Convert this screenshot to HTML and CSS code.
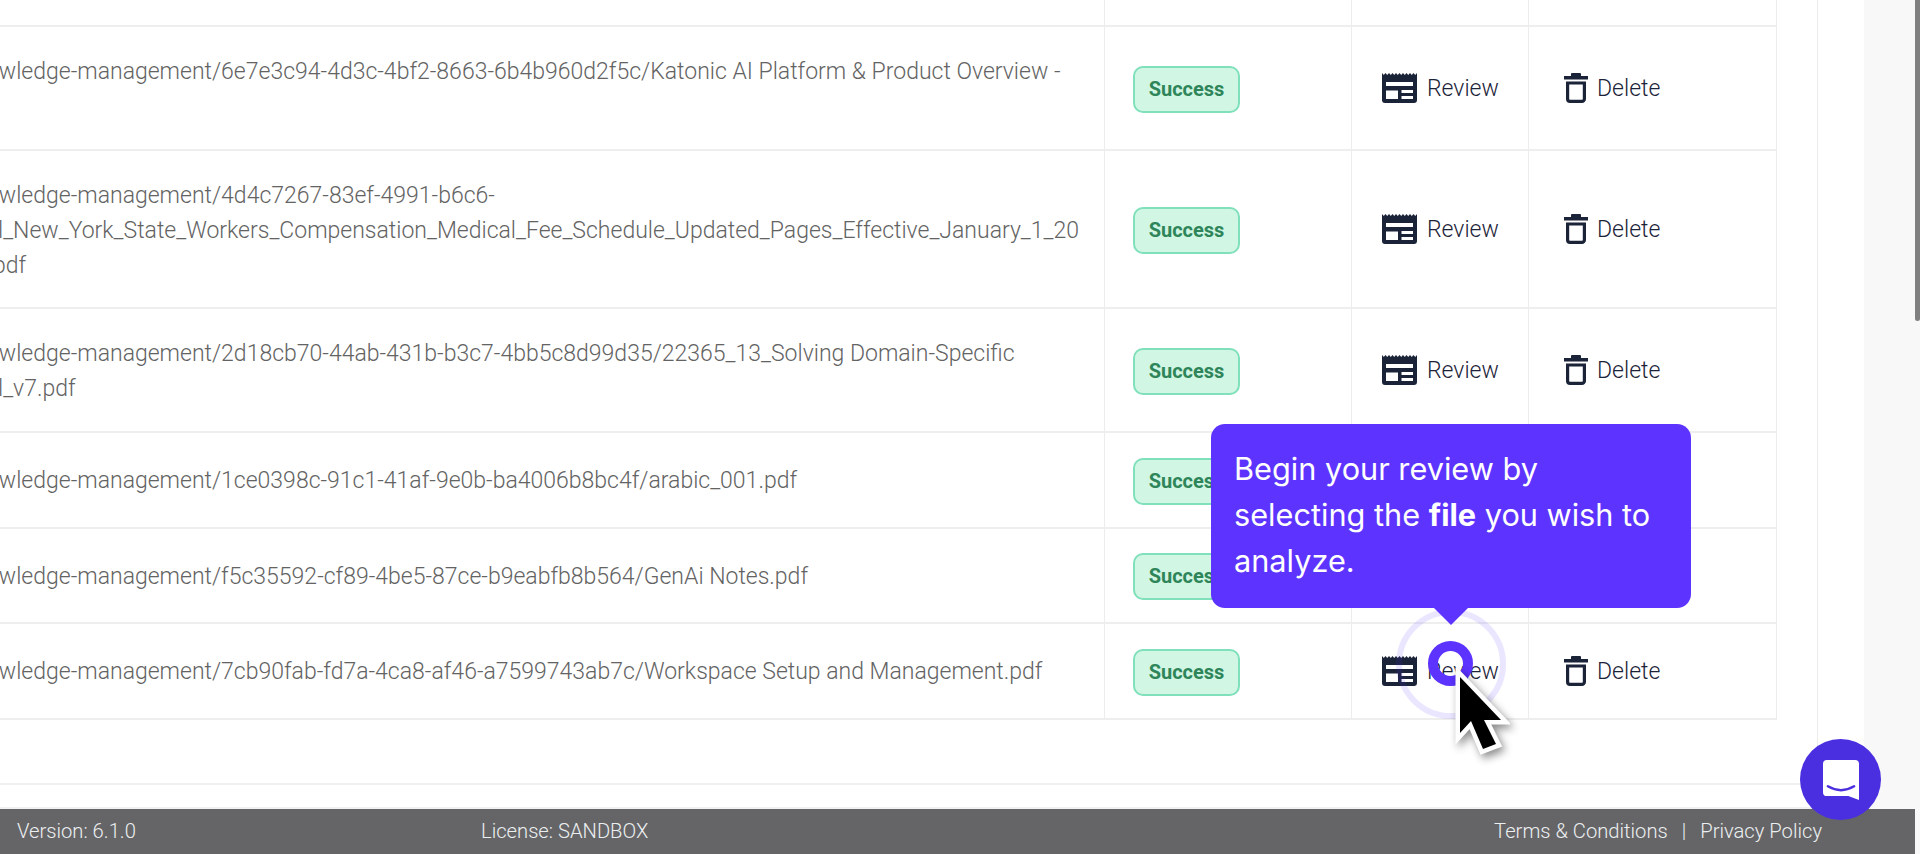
FILE: index.html
```html
<!DOCTYPE html>
<html lang="en">
<head>
<meta charset="utf-8">
<title>Knowledge management review</title>
<link rel="stylesheet" href="styles.css">
</head>
<body>
<svg class="defs" width="0" height="0" aria-hidden="true">
  <symbol id="i-review" viewBox="0 0 35 30">
    <path fill="#1b2338" d="M0 0l1.750 2L3.500 0l1.750 2L7 0l1.750 2L10.500 0l1.750 2L14 0l1.750 2L17.500 0l1.750 2L21 0l1.750 2L24.500 0l1.750 2L28 0l1.750 2L31.500 0l1.750 2L35 0v27a3 3 0 0 1-3 3H3a3 3 0 0 1-3-3z"/>
    <path fill="#fff" d="M4 9h27v4H4zM4 17.500h12V26H4zM19.500 17h11.500v3H19.500zM19.500 23h11.500v3H19.500z"/>
  </symbol>
  <symbol id="i-delete" viewBox="0 0 24 30">
    <path fill="#1b2338" d="M8 0h8a1 1 0 0 1 1 1v2h7v3.500H0V3h7V1a1 1 0 0 1 1-1z"/>
    <path fill="none" stroke="#1b2338" stroke-width="3.200" d="M3.600 10h16.800v16a2.400 2.400 0 0 1-2.400 2.400H6A2.400 2.400 0 0 1 3.600 26z"/>
  </symbol>
</svg>
<div class="page">
  <div class="workspace">
    <main class="main">
      <div class="card">
        <div class="table">
          <div class="row row-top">
            <div class="cell path"></div><div class="cell status"></div><div class="cell action"></div><div class="cell action-del"></div>
          </div>
          <div class="row row-a">
            <div class="cell path"><p class="path-text">knowledge-management/6e7e3c94-4d3c-4bf2-8663-6b4b960d2f5c/Katonic AI Platform &amp; Product Overview -</p></div>
            <div class="cell status"><span class="badge">Success</span></div>
            <div class="cell action"><svg class="ic-review"><use href="#i-review"/></svg><span>Review</span></div>
            <div class="cell action-del"><svg class="ic-delete"><use href="#i-delete"/></svg><span>Delete</span></div>
          </div>
          <div class="row row-b">
            <div class="cell path"><p class="path-text">knowledge-management/4d4c7267-83ef-4991-b6c6-<br>Eval_New_York_State_Workers_Compensation_Medical_Fee_Schedule_Updated_Pages_Effective_January_1_20<br>24.pdf</p></div>
            <div class="cell status"><span class="badge">Success</span></div>
            <div class="cell action"><svg class="ic-review"><use href="#i-review"/></svg><span>Review</span></div>
            <div class="cell action-del"><svg class="ic-delete"><use href="#i-delete"/></svg><span>Delete</span></div>
          </div>
          <div class="row row-c">
            <div class="cell path"><p class="path-text">knowledge-management/2d18cb70-44ab-431b-b3c7-4bb5c8d99d35/22365_13_Solving Domain-Specific<br>Eval_v7.pdf</p></div>
            <div class="cell status"><span class="badge">Success</span></div>
            <div class="cell action"><svg class="ic-review"><use href="#i-review"/></svg><span>Review</span></div>
            <div class="cell action-del"><svg class="ic-delete"><use href="#i-delete"/></svg><span>Delete</span></div>
          </div>
          <div class="row row-d">
            <div class="cell path"><p class="path-text">knowledge-management/1ce0398c-91c1-41af-9e0b-ba4006b8bc4f/arabic_001.pdf</p></div>
            <div class="cell status"><span class="badge">Success</span></div>
            <div class="cell action"></div>
            <div class="cell action-del"></div>
          </div>
          <div class="row row-d">
            <div class="cell path"><p class="path-text">knowledge-management/f5c35592-cf89-4be5-87ce-b9eabfb8b564/GenAi Notes.pdf</p></div>
            <div class="cell status"><span class="badge">Success</span></div>
            <div class="cell action"></div>
            <div class="cell action-del"></div>
          </div>
          <div class="row row-d row-last">
            <div class="cell path"><p class="path-text">knowledge-management/7cb90fab-fd7a-4ca8-af46-a7599743ab7c/Workspace Setup and Management.pdf</p></div>
            <div class="cell status"><span class="badge">Success</span></div>
            <div class="cell action"><svg class="ic-review"><use href="#i-review"/></svg><span>Review</span></div>
            <div class="cell action-del"><svg class="ic-delete"><use href="#i-delete"/></svg><span>Delete</span></div>
          </div>
        </div>
        <div class="card-foot"></div>
      </div>
    </main>
    <div class="gutter"></div>
  </div>
  <footer class="footer">
    <span class="version">Version: 6.1.0</span>
    <span class="license">License: SANDBOX</span>
    <span class="legal">Terms &amp; Conditions<span class="sep">|</span>Privacy Policy</span>
  </footer>
  <div class="scrollbar"><div class="thumb"></div></div>
</div>

<div class="beacon-ring"></div>
<div class="tooltip">
  Begin your review by selecting the <strong>file</strong> you wish to analyze.
  <span class="tip-arrow"></span>
</div>
<div class="beacon-dot"></div>
<svg class="cursor" viewBox="0 0 60 92" aria-hidden="true">
  <path class="cursor-shape" d="M10 9V65L21 53L33 81L46 76L34 52H51Z"/>
</svg>
<div class="chat">
  <svg viewBox="0 0 37 41" width="36" height="40" aria-hidden="true">
    <path fill="#fff" d="M4 0h29a4 4 0 0 1 4 4v37l-11-4H4a4 4 0 0 1-4-4V4a4 4 0 0 1 4-4z"/>
    <path fill="none" stroke="#4a2fe0" stroke-width="2.500" stroke-linecap="round" d="M5 27q13.500 8 27 0"/>
  </svg>
</div>
</body>
</html>
```

FILE: styles.css
```css
* { box-sizing: border-box; }
html, body { margin: 0; height: 100%; overflow: hidden; background: #fff; }
body { font-family: Roboto, "Liberation Sans", sans-serif; color: #1b2338; }
.defs { position: absolute; }

.page { height: 854px; display: flex; flex-direction: column; position: relative; }
.workspace { flex: 1; display: flex; min-height: 0; }
.main { width: 1864px; background: #fff; }
.card { width: 1818px; height: 809px; border-right: 1px solid #ececec; border-bottom: 2px solid #f0f0f0; }
.gutter { flex: 1; background: #f8f8f8; }

.table { width: 1777px; border-right: 1px solid #ececec; }
.row { display: flex; border-bottom: 2px solid #eee; }
.row-top { height: 27px; }
.row-a { height: 124px; }
.row-b { height: 158px; }
.row-c { height: 124px; }
.row-d { height: 96px; }
.row-d:nth-child(6) { height: 95px; }
.row-last { height: 96px; }
.card-foot { height: 65px; border-bottom: 2px solid #f0f0f0; }

.cell { display: flex; align-items: center; border-right: 1px solid #ececec; }
.path { width: 1105px; overflow: hidden; align-items: flex-start; }
.status { width: 247px; padding: 2px 0 0 28px; }
.action { width: 177px; padding-left: 30px; gap: 10px; font-size: 23px; font-weight: 300; }
.action-del { width: 247px; padding-left: 35px; gap: 9px; font-size: 23px; font-weight: 300; border-right: 0; }

.path-text { margin: 27px 0 0 -38px; font-size: 23px; line-height: 35px; font-weight: 300; color: #636363; white-space: nowrap; }
.row-d .path-text { margin-top: 30px; }

.badge {
  display: inline-block; width: 107px; height: 47px; line-height: 43px; text-align: center;
  border: 2px solid #7fe0bb; border-radius: 10px; background: #d1f7e4;
  color: #2f855a; font-size: 20px; font-weight: 700;
}
.ic-review { width: 35px; height: 30px; flex: none; }
.ic-delete { width: 24px; height: 30px; flex: none; }

.footer {
  height: 45px; width: 1915px; background: #656567; color: #eceff1;
  display: flex; align-items: center; font-size: 20.200px; font-weight: 300; padding: 0 93px 2px 17px;
}
.version { width: 464px; }
.legal { margin-left: auto; }
.sep { margin: 0 14px; }

.scrollbar { position: absolute; top: 0; right: 0; width: 5px; height: 854px; background: #f8f8f8; }
.thumb { height: 321px; background: #808080; border-radius: 0 0 3px 3px; }

.tooltip {
  position: absolute; left: 1211px; top: 424px; width: 480px; height: 184px;
  background: #5c33ff; border-radius: 14px; color: #fff;
  font-family: Inter, sans-serif; font-size: 30.700px; line-height: 46px; font-weight: 400;
  padding: 22px 27px 22px 23px;
}
.tooltip strong { font-weight: 700; }
.tip-arrow {
  position: absolute; left: 223px; bottom: -17px; width: 0; height: 0;
  border-left: 17px solid transparent; border-right: 17px solid transparent; border-top: 17px solid #5c33ff;
}
.beacon-ring { position: absolute; left: 1396px; top: 609px; width: 110px; height: 110px; border-radius: 50%; border: 6px solid rgba(92, 51, 255, .12); }
.beacon-dot { position: absolute; left: 1428px; top: 641px; width: 45px; height: 45px; border-radius: 50%; border: 10px solid #5c33ff; }
.cursor { position: absolute; left: 1450px; top: 668px; width: 60px; height: 92px; filter: drop-shadow(3px 4px 4px rgba(0,0,0,.45)); }
.cursor-shape { fill: #000; stroke: #fff; stroke-width: 9; stroke-linejoin: miter; paint-order: stroke; }
.chat {
  position: absolute; left: 1800px; top: 739px; width: 81px; height: 81px; border-radius: 50%;
  background: #4a2fe0; display: flex; align-items: center; justify-content: center;
}
```
